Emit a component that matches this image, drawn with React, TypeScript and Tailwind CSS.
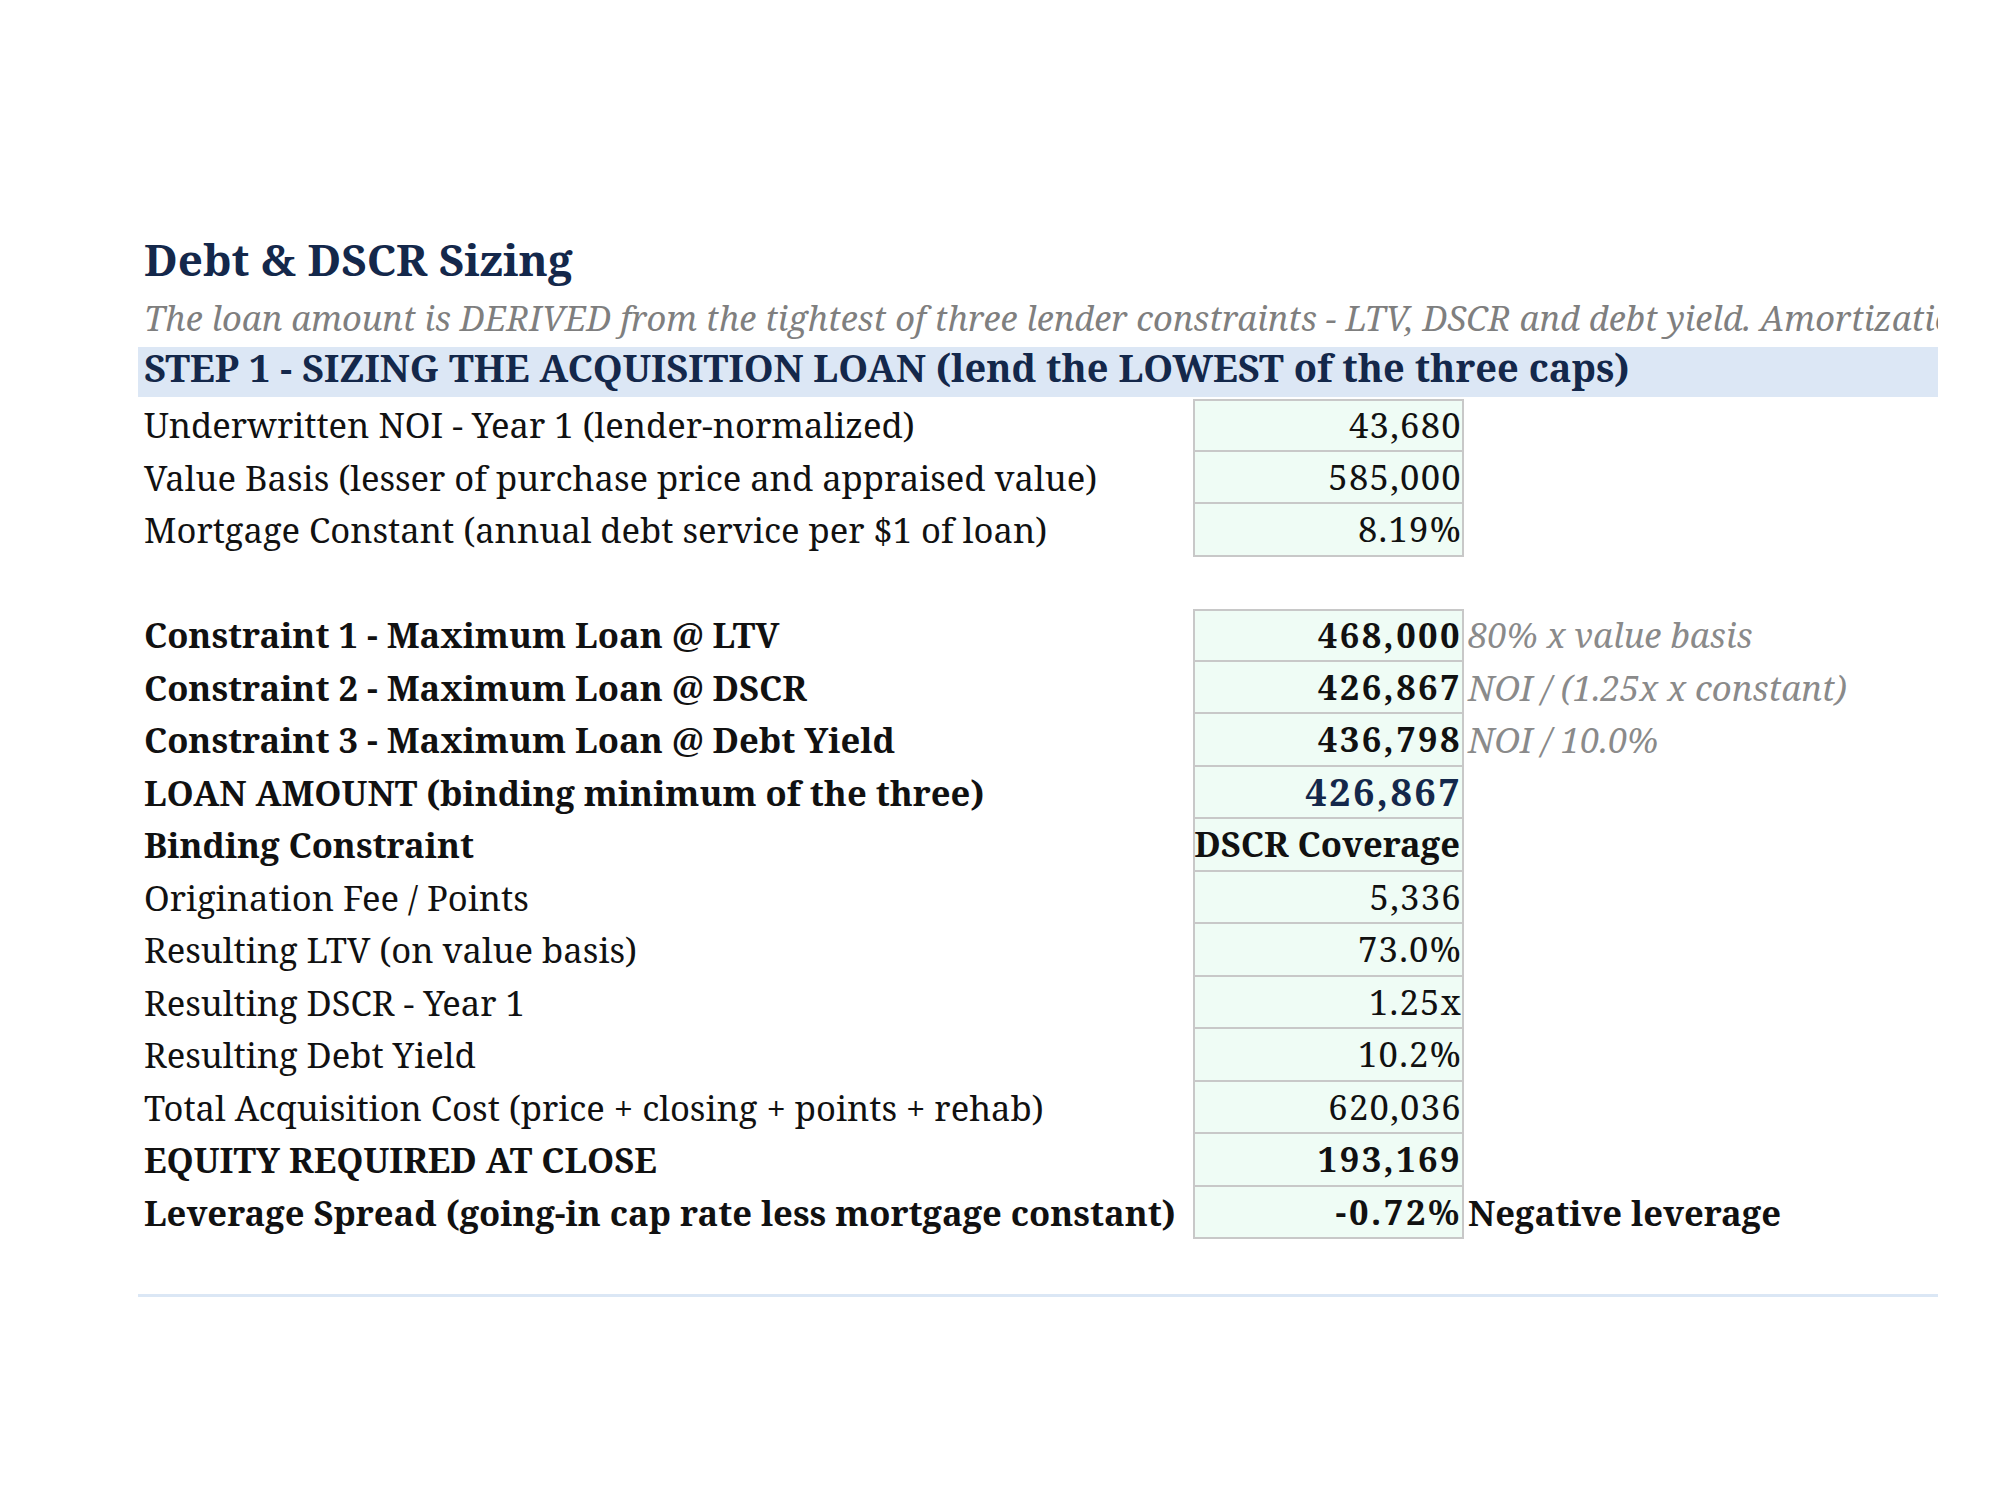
import React from 'react';

type Row = {
  label: string;
  value: string;
  bold?: boolean;
  note?: string;
  noteStyle?: 'italic' | 'bold';
  valueClass?: string;
  first?: boolean;
} | null;

const rows: Row[] = [
  { label: 'Underwritten NOI - Year 1 (lender-normalized)', value: '43,680', first: true, valueClass: 'tracking-[1.3px]' },
  { label: 'Value Basis (lesser of purchase price and appraised value)', value: '585,000', valueClass: 'tracking-[1.3px]' },
  { label: 'Mortgage Constant (annual debt service per $1 of loan)', value: '8.19%', valueClass: 'tracking-[1.3px]' },
  null,
  { label: 'Constraint 1 - Maximum Loan @ LTV', value: '468,000', bold: true, note: '80% x value basis', noteStyle: 'italic', first: true, valueClass: 'tracking-[2.4px]' },
  { label: 'Constraint 2 - Maximum Loan @ DSCR', value: '426,867', bold: true, note: 'NOI / (1.25x x constant)', noteStyle: 'italic', valueClass: 'tracking-[2.4px]' },
  { label: 'Constraint 3 - Maximum Loan @ Debt Yield', value: '436,798', bold: true, note: 'NOI / 10.0%', noteStyle: 'italic', valueClass: 'tracking-[2.4px]' },
  { label: 'LOAN AMOUNT (binding minimum of the three)', value: '426,867', bold: true, valueClass: 'text-[#14284b] text-[38px] tracking-[2.4px]' },
  { label: 'Binding Constraint', value: 'DSCR Coverage', bold: true, valueClass: 'pr-[2px]' },
  { label: 'Origination Fee / Points', value: '5,336', valueClass: 'tracking-[1.3px]' },
  { label: 'Resulting LTV (on value basis)', value: '73.0%', valueClass: 'tracking-[1.3px]' },
  { label: 'Resulting DSCR - Year 1', value: '1.25x', valueClass: 'tracking-[1.3px]' },
  { label: 'Resulting Debt Yield', value: '10.2%', valueClass: 'tracking-[1.3px]' },
  { label: 'Total Acquisition Cost (price + closing + points + rehab)', value: '620,036', valueClass: 'tracking-[1.3px]' },
  { label: 'EQUITY REQUIRED AT CLOSE', value: '193,169', bold: true, valueClass: 'tracking-[2.4px]' },
  { label: 'Leverage Spread (going-in cap rate less mortgage constant)', value: '-0.72%', bold: true, note: 'Negative leverage', noteStyle: 'bold', valueClass: 'tracking-[2.6px]' },
];

export default function App() {
  return (
    <div
      className="w-[2000px] h-[1500px] bg-white overflow-hidden text-[#111111]"
      style={{ fontFamily: '"Noto Serif", Caladea, "DejaVu Serif", serif' }}
    >
      <div className="ml-[138px] w-[1800px] overflow-hidden pt-[230px]">
        <div className="h-[58px] flex items-center pl-[6px] text-[44px] font-bold text-[#14284b] whitespace-nowrap">
          Debt &amp; DSCR Sizing
        </div>
        <div className="h-[59px] flex items-center pl-[6px] text-[34.4px] italic text-[#7f7f7f] whitespace-nowrap overflow-hidden">
          The loan amount is DERIVED from the tightest of three lender constraints - LTV, DSCR and debt yield. Amortization and rate drive the mortgage constant.
        </div>
        <div className="h-[50px] flex items-center pl-[6px] pb-[9px] bg-[#dce7f5] text-[38px] font-bold text-[#14284b] whitespace-nowrap">
          STEP 1 - SIZING THE ACQUISITION LOAN (lend the LOWEST of the three caps)
        </div>
        <div className="mt-[2px] flex flex-col">
          {rows.map((r, i) =>
            r === null ? (
              <div key={i} className="h-[52.5px]" />
            ) : (
              <div key={i} className="h-[52.5px] flex items-stretch text-[34.6px] whitespace-nowrap">
                <div className={`w-[1055px] pl-[6px] flex items-center ${r.bold ? 'font-bold' : ''}`}>{r.label}</div>
                <div
                  className={`w-[271px] bg-[#effcf5] border-x-2 border-b-2 border-[#c8c8c8] ${r.first ? 'border-t-2' : ''} flex items-center justify-end ${r.bold ? 'font-bold' : ''} ${r.valueClass ?? ''}`}
                >
                  {r.value}
                </div>
                {r.note && (
                  <div
                    className={`pl-[4px] flex items-center ${r.noteStyle === 'italic' ? 'italic text-[#8a8a8a]' : 'font-bold'}`}
                  >
                    {r.note}
                  </div>
                )}
              </div>
            )
          )}
        </div>
        <div className="mt-[55px] h-[3px] bg-[#dbe7f5]" />
      </div>
    </div>
  );
}
